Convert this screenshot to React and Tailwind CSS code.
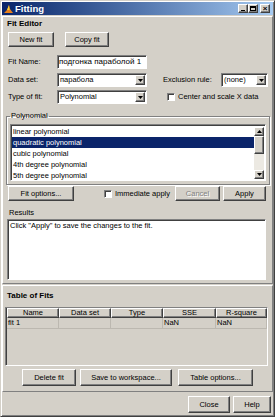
import React from 'react';

const raised = 'border border-t-white border-l-white border-r-[#404040] border-b-[#404040] shadow-[inset_-1px_-1px_0_#808080] bg-[#d4d0c8]';
const sunken = 'border border-t-[#808080] border-l-[#808080] border-r-white border-b-white shadow-[inset_1px_1px_0_#404040]';
const panel = 'border border-t-white border-l-white border-r-[#808080] border-b-[#808080]';

const Tri = ({ up }) => (
    <svg width="5" height="3" viewBox="0 0 5 3">
        <path d={up ? 'M0 3 L2.5 0 L5 3 Z' : 'M0 0 L5 0 L2.5 3 Z'} fill="black" />
    </svg>
);

const Button = ({ children, className, disabled }) => (
    <div className={`${raised} ${className} flex items-center justify-center`}>
        <span className={disabled ? 'text-[#808080] [text-shadow:1px_1px_0_white]' : ''}>{children}</span>
    </div>
);

const Select = ({ value, className }) => (
    <div className={`${className} h-[14px] bg-white flex items-center ${sunken}`}>
        <span className="flex-1 pl-[2px] whitespace-nowrap overflow-hidden">{value}</span>
        <div className={`w-[10px] h-[10px] mr-[1px] ${raised} flex items-center justify-center`}>
            <Tri />
        </div>
    </div>
);

const Check = () => <div className={`w-[8px] h-[8px] bg-white ${sunken}`}></div>;

const App = () => {
    const items = ['linear polynomial', 'quadratic polynomial', 'cubic polynomial', '4th degree polynomial', '5th degree polynomial'];
    const cols = [
        { name: 'Name', w: 'w-[52px]' },
        { name: 'Data set', w: 'w-[52px]' },
        { name: 'Type', w: 'w-[52px]' },
        { name: 'SSE', w: 'w-[53px]' },
        { name: 'R-square', w: 'flex-1' },
    ];

    return (
        <div className="w-[275px] h-[417px] bg-[#d4d0c8] flex flex-col border border-t-[#d4d0c8] border-l-[#d4d0c8] border-r-[#404040] border-b-[#404040] shadow-[inset_1px_1px_0_white,inset_-1px_-1px_0_#808080] px-[1px] pt-[1px] font-['Liberation_Sans',Arial,sans-serif] text-[7.5px] leading-none text-black">
            {/* title bar */}
            <div className="h-[13px] bg-linear-to-r from-[#0a246a] to-[#a6caf0] flex items-center pl-[2px] pr-[3px]">
                <svg width="9" height="10" viewBox="0 0 9 10">
                    <path d="M0 9 L3 6 L5 1 L6 5 L9 9 Z" fill="#e8801a" />
                    <path d="M3 6 L5 1 L5.5 6 Z" fill="#f7d038" />
                </svg>
                <span className="ml-[2px] text-white font-bold text-[9.5px]">Fitting</span>
                <div className="flex-1"></div>
                <div className={`w-[10px] h-[9px] ${raised} flex items-end justify-center pb-[1px]`}>
                    <div className="w-[4px] h-[1px] bg-black"></div>
                </div>
                <div className={`w-[10px] h-[9px] ${raised} flex items-center justify-center`}>
                    <div className="w-[6px] h-[5px] border border-black border-t-2"></div>
                </div>
                <div className={`ml-[2px] w-[10px] h-[9px] ${raised} flex items-center justify-center text-[8px] font-bold`}>×</div>
            </div>

            {/* Fit Editor */}
            <div className={`mt-[1px] h-[268px] ${panel} flex flex-col`}>
                <div className="mt-[2px] ml-[4px] h-[10px] font-bold text-[8px] leading-[10px]">Fit Editor</div>
                <div className="mt-[3px] h-[15px] flex ml-[5px]">
                    <Button className="w-[46px]">New fit</Button>
                    <Button className="ml-[11px] w-[44px]">Copy fit</Button>
                </div>
                <div className="mt-[8px] h-[14px] flex items-center">
                    <span className="w-[54px] pl-[5px]">Fit Name:</span>
                    <div className={`w-[90px] h-[14px] bg-white ${sunken} flex items-center pl-[1px] whitespace-nowrap text-[8px]`}>подгонка параболой 1</div>
                </div>
                <div className="mt-[4px] h-[14px] flex items-center">
                    <span className="w-[54px] pl-[5px]">Data set:</span>
                    <Select className="w-[90px]" value="парабола" />
                    <span className="ml-[16px] w-[58px]">Exclusion rule:</span>
                    <Select className="w-[47px]" value="(none)" />
                </div>
                <div className="mt-[3px] h-[14px] flex items-center">
                    <span className="w-[54px] pl-[5px]">Type of fit:</span>
                    <Select className="w-[90px]" value="Polynomial" />
                    <div className="ml-[20px]"><Check /></div>
                    <span className="ml-[3px]">Center and scale X data</span>
                </div>

                <fieldset className="mt-[7px] ml-[3px] w-[263px] h-[74px] border border-[#808080] shadow-[1px_1px_0_white,inset_1px_1px_0_white] px-[3px]">
                    <legend className="px-[1px] h-[10px] leading-[10px]">Polynomial</legend>
                    <div className={`mt-[3px] w-[256px] h-[57px] bg-white ${sunken} flex`}>
                        <div className="flex-1 pt-[1px] pl-[1px]">
                            {items.map((it, i) => (
                                <div key={it} className={`h-[11px] leading-[11px] pl-[1px] ${i === 1 ? 'bg-[#0a246a] text-white' : ''}`}>{it}</div>
                            ))}
                        </div>
                        <div className="w-[10px] mt-[2px] mb-[1px] mr-[1px] bg-[#ece9e2] flex flex-col">
                            <div className={`h-[9px] ${raised} flex items-center justify-center`}><Tri up /></div>
                            <div className={`h-[18px] ${raised}`}></div>
                            <div className="flex-1"></div>
                            <div className={`h-[9px] ${raised} flex items-center justify-center`}><Tri /></div>
                        </div>
                    </div>
                </fieldset>

                <div className="mt-[1px] h-[15px] flex items-center">
                    <Button className="ml-[5px] w-[66px] h-[15px]">Fit options...</Button>
                    <div className="ml-[30px]"><Check /></div>
                    <span className="ml-[3px]">Immediate apply</span>
                    <div className="flex-1"></div>
                    <Button className="w-[45px] h-[15px]" disabled>Cancel</Button>
                    <Button className="ml-[3px] w-[43px] h-[15px] mr-[6px]">Apply</Button>
                </div>
                <div className="mt-[8px] h-[9px] ml-[6px]">Results</div>
                <div className={`mt-[1px] ml-[4px] w-[259px] h-[61px] bg-white ${sunken} pl-[2px] pt-[2px]`}>
                    Click "Apply" to save the changes to the fit.
                </div>
            </div>

            {/* Table of Fits */}
            <div className={`mt-[1px] h-[107px] ${panel} flex flex-col`}>
                <div className="mt-[5px] ml-[4px] h-[10px] font-bold text-[8px] leading-[10px]">Table of Fits</div>
                <div className={`mt-[6px] ml-[2px] w-[263px] h-[59px] ${sunken} flex flex-col`}>
                    <div className="flex h-[10px] ml-[1px]">
                        {cols.map((c) => (
                            <div key={c.name} className={`${c.w} ${raised} flex items-center justify-center`}>{c.name}</div>
                        ))}
                    </div>
                    <div className="flex h-[11px] ml-[1px]">
                        {cols.map((c, i) => (
                            <div key={c.name} className={`${c.w} border-r border-b border-[#bcb8b0] pl-[1px] flex items-center`}>
                                {i === 0 ? 'fit 1' : i >= 3 ? 'NaN' : ''}
                            </div>
                        ))}
                    </div>
                </div>
                <div className="mt-[3px] h-[17px] flex">
                    <Button className="ml-[19px] w-[54px]">Delete fit</Button>
                    <Button className="ml-[4px] w-[92px]">Save to workspace...</Button>
                    <Button className="ml-[6px] w-[75px]">Table options...</Button>
                </div>
            </div>

            {/* bottom buttons */}
            <div className="mt-[4px] h-[17px] flex justify-end">
                <Button className="w-[42px]">Close</Button>
                <Button className="ml-[3px] w-[38px] mr-[2px]">Help</Button>
            </div>
        </div>
    );
};

export default App;
